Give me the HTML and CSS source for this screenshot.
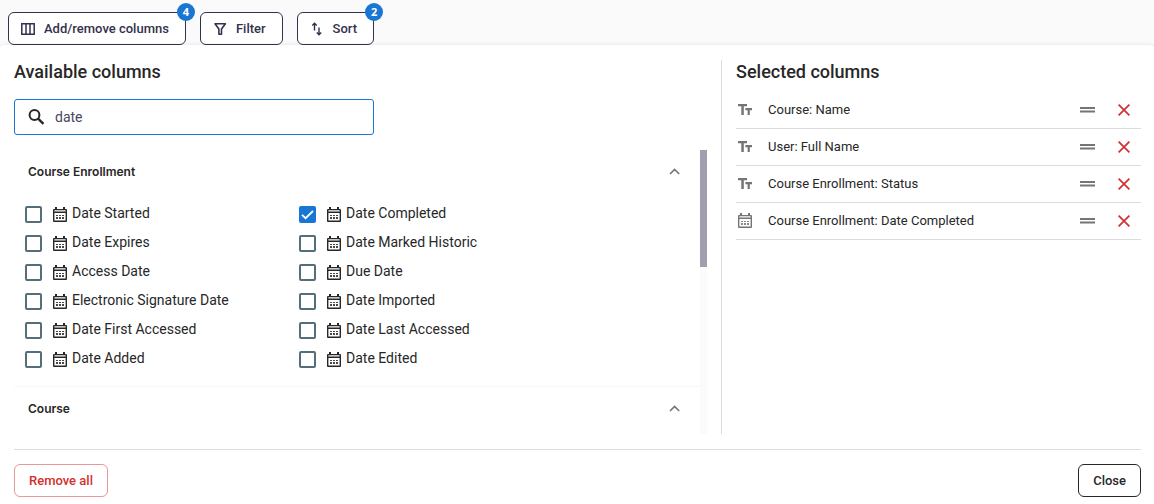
FILE: index.html
```html
<!DOCTYPE html>
<html lang="en">
<head>
    <meta charset="UTF-8">
    <meta name="viewport" content="width=device-width, initial-scale=1.0">
    <title>Report columns</title>
    <link rel="stylesheet" href="styles.css">
</head>
<body>
    <svg class="sprite" aria-hidden="true">
        <symbol id="calendar" viewBox="0 0 14 15">
            <path d="M2 0h2v2h6V0h2v2h1.300l.7.8v11.400l-.7.8H.7l-.7-.8V2.800L.7 2H2zM1.400 3.200v1.400h11.200V3.200zM1.400 6v7.600h11.200V6z" fill="currentColor" fill-rule="evenodd"/>
            <path d="M3 8h2v1H3zM6 8h2v1H6zM9 8h2v1H9zM3 10h2v2H3zM6 10h2v2H6zM9 10h2v2H9z" fill="currentColor" opacity="0.85"/>
        </symbol>
        <symbol id="text" viewBox="0 0 14 11">
            <path d="M0 0h9v2.300H5.800V11H3.300V2.300H0zM7.400 4H14v2.200h-2.200V11H9.600V6.200H7.400z" fill="currentColor"/>
        </symbol>
        <symbol id="drag" viewBox="0 0 16 6">
            <path d="M0 0h15v2H0zM0 3.600h15v1.900H0z" fill="currentColor"/>
        </symbol>
        <symbol id="cross" viewBox="0 0 12 12">
            <path d="M0.600 0.600l10.800 10.800M11.400 0.600L0.600 11.400" fill="none" stroke="currentColor" stroke-width="1.700"/>
        </symbol>
        <symbol id="chevron" viewBox="0 0 12 7">
            <path d="M1 6l4.600-4.500L10.200 6" fill="none" stroke="currentColor" stroke-width="1.700"/>
        </symbol>
    </svg>

    <div class="toolbar">
        <button class="tool-button" type="button">
            <svg width="14" height="12" viewBox="0 0 14 12"><path d="M0.8 0.8h12.4v10.4H0.8zM5 1v10M9 1v10" fill="none" stroke="currentColor" stroke-width="1.5"/></svg>
            Add/remove columns
            <span class="badge">4</span>
        </button>
        <button class="tool-button" type="button">
            <svg width="14" height="12" viewBox="0 0 14 12"><path d="M2 0.8h10.400L8.500 6v5.200H5.900V6z" fill="none" stroke="currentColor" stroke-width="1.6" stroke-linejoin="round"/></svg>
            Filter
        </button>
        <button class="tool-button" type="button">
            <svg width="14" height="14" viewBox="0 0 14 14"><path d="M4.5 8.500V1.2M2.300 3.500L4.5 1.2 6.700 3.500M9 5.500v7.300M6.800 10.500L9 12.800l2.200-2.300" fill="none" stroke="currentColor" stroke-width="1.4"/></svg>
            Sort
            <span class="badge">2</span>
        </button>
    </div>

    <div class="panel">
        <div class="columns">
            <section class="available">
                <h2>Available columns</h2>
                <label class="search">
                    <svg width="16" height="16" viewBox="0 0 16 16"><circle cx="6.500" cy="6" r="4.900" fill="none" stroke="currentColor" stroke-width="2"/><path d="M10.100 9.600l5.400 5.400" stroke="currentColor" stroke-width="2.400"/></svg>
                    <input type="text" value="date" aria-label="Search columns">
                </label>
                <div class="list-wrapper">
                    <div class="list">
                        <div class="group">
                            <button class="group-header" type="button">Course Enrollment <svg width="12" height="7"><use href="#chevron"/></svg></button>
                            <div class="options">
                                <label class="option"><input type="checkbox"><svg width="14" height="15"><use href="#calendar"/></svg><span>Date Started</span></label>
                                <label class="option"><input type="checkbox" checked><svg width="14" height="15"><use href="#calendar"/></svg><span>Date Completed</span></label>
                                <label class="option"><input type="checkbox"><svg width="14" height="15"><use href="#calendar"/></svg><span>Date Expires</span></label>
                                <label class="option"><input type="checkbox"><svg width="14" height="15"><use href="#calendar"/></svg><span>Date Marked Historic</span></label>
                                <label class="option"><input type="checkbox"><svg width="14" height="15"><use href="#calendar"/></svg><span>Access Date</span></label>
                                <label class="option"><input type="checkbox"><svg width="14" height="15"><use href="#calendar"/></svg><span>Due Date</span></label>
                                <label class="option"><input type="checkbox"><svg width="14" height="15"><use href="#calendar"/></svg><span>Electronic Signature Date</span></label>
                                <label class="option"><input type="checkbox"><svg width="14" height="15"><use href="#calendar"/></svg><span>Date Imported</span></label>
                                <label class="option"><input type="checkbox"><svg width="14" height="15"><use href="#calendar"/></svg><span>Date First Accessed</span></label>
                                <label class="option"><input type="checkbox"><svg width="14" height="15"><use href="#calendar"/></svg><span>Date Last Accessed</span></label>
                                <label class="option"><input type="checkbox"><svg width="14" height="15"><use href="#calendar"/></svg><span>Date Added</span></label>
                                <label class="option"><input type="checkbox"><svg width="14" height="15"><use href="#calendar"/></svg><span>Date Edited</span></label>
                            </div>
                        </div>
                        <div class="group">
                            <button class="group-header" type="button">Course <svg width="12" height="7"><use href="#chevron"/></svg></button>
                        </div>
                    </div>
                    <div class="scrollbar"><div class="thumb"></div></div>
                </div>
            </section>

            <section class="selected">
                <h2>Selected columns</h2>
                <ul>
                    <li>
                        <svg width="14" height="11"><use href="#text"/></svg>
                        <span>Course: Name</span>
                        <button class="drag" type="button" aria-label="Move"><svg width="16" height="6"><use href="#drag"/></svg></button>
                        <button class="remove" type="button" aria-label="Remove"><svg width="12" height="12"><use href="#cross"/></svg></button>
                    </li>
                    <li>
                        <svg width="14" height="11"><use href="#text"/></svg>
                        <span>User: Full Name</span>
                        <button class="drag" type="button" aria-label="Move"><svg width="16" height="6"><use href="#drag"/></svg></button>
                        <button class="remove" type="button" aria-label="Remove"><svg width="12" height="12"><use href="#cross"/></svg></button>
                    </li>
                    <li>
                        <svg width="14" height="11"><use href="#text"/></svg>
                        <span>Course Enrollment: Status</span>
                        <button class="drag" type="button" aria-label="Move"><svg width="16" height="6"><use href="#drag"/></svg></button>
                        <button class="remove" type="button" aria-label="Remove"><svg width="12" height="12"><use href="#cross"/></svg></button>
                    </li>
                    <li>
                        <svg width="14" height="15"><use href="#calendar"/></svg>
                        <span>Course Enrollment: Date Completed</span>
                        <button class="drag" type="button" aria-label="Move"><svg width="16" height="6"><use href="#drag"/></svg></button>
                        <button class="remove" type="button" aria-label="Remove"><svg width="12" height="12"><use href="#cross"/></svg></button>
                    </li>
                </ul>
            </section>
        </div>
        <div class="footer">
            <button class="remove-all" type="button">Remove all</button>
            <button class="close" type="button">Close</button>
        </div>
    </div>
</body>
</html>
```
FILE: styles.css
```css
* {
    box-sizing: border-box;
}
body {
    margin: 0;
    background-color: #fafafa;
    color: #272727;
    font-family: Roboto, sans-serif;
    font-size: 14px;
}
button, input {
    font-family: inherit;
    color: inherit;
    margin: 0;
}
button {
    cursor: pointer;
}
svg {
    display: block;
    flex-shrink: 0;
}
.sprite {
    position: absolute;
    width: 0;
    height: 0;
}
.toolbar {
    display: flex;
    gap: 14px;
    padding: 12px 8px 0;
}
.tool-button {
    position: relative;
    display: flex;
    align-items: center;
    gap: 9px;
    height: 33px;
    padding: 0 16px 0 12px;
    border: 1px solid #34314c;
    border-radius: 6px;
    background-color: #fff;
    color: #34314c;
    font-size: 13px;
    font-weight: 500;
}
.badge {
    position: absolute;
    top: -10px;
    right: -10px;
    width: 18px;
    height: 18px;
    border-radius: 50%;
    background-color: #1976d2;
    color: #fff;
    font-family: "Open Sans", sans-serif;
    font-size: 11px;
    font-weight: 700;
    line-height: 17px;
    text-align: center;
}
.panel {
    position: relative;
    padding: 15px 13px 7px 14px;
    border-radius: 4px 4px 0 0;
    background-color: #fff;
    box-shadow: 0 0 4px rgba(0, 0, 0, 0.1);
}
.columns {
    display: grid;
    grid-template-columns: minmax(0, 1fr) 420px;
    padding-bottom: 15px;
    border-bottom: 1px solid #dcdcdc;
}
h2 {
    margin: 0;
    font-size: 18px;
    font-weight: 500;
    line-height: 24px;
}
.available {
    padding-right: 14px;
}
.search {
    display: flex;
    align-items: center;
    gap: 11px;
    width: 360px;
    max-width: 100%;
    height: 36px;
    margin: 15px 0;
    padding: 0 13px;
    border: 1px solid #1976d2;
    border-radius: 3px;
}
.search input {
    flex: 1;
    min-width: 0;
    padding: 0;
    border: none;
    outline: none;
    background: none;
    color: #4a4660;
    font-size: 14px;
}
.list-wrapper {
    display: flex;
    height: 284px;
}
.list {
    flex: 1;
    overflow: hidden;
}
.group + .group {
    border-top: 1px solid #f7f7f7;
}
.group-header {
    display: flex;
    justify-content: space-between;
    align-items: center;
    width: 100%;
    height: 42px;
    padding: 0 19px 0 14px;
    border: none;
    background: none;
    font-family: Inter, sans-serif;
    font-size: 12px;
    font-weight: 600;
}
.group-header svg {
    color: #757575;
}
.options {
    display: grid;
    grid-template-columns: 274px 1fr;
    grid-auto-rows: 29px;
    padding: 8px 11px 12px;
}
.option {
    display: flex;
    align-items: center;
    font-size: 14px;
    cursor: pointer;
}
.option svg {
    margin: 0 5px 0 11px;
}
.option span {
    padding-bottom: 3px;
}
.option input {
    appearance: none;
    flex-shrink: 0;
    width: 17px;
    height: 17px;
    border: 2px solid #546e7a;
    border-radius: 2px;
}
.option input:checked {
    border-color: #1976d2;
    background: #1976d2 url("data:image/svg+xml,%3Csvg xmlns='http://www.w3.org/2000/svg' viewBox='0 0 13 13'%3E%3Cpath d='M1 6.8l3.6 3.4L12 3' fill='none' stroke='white' stroke-width='1.8'/%3E%3C/svg%3E") center no-repeat;
}
.scrollbar {
    width: 7px;
    background-color: #fbfbfb;
}
.thumb {
    height: 117px;
    background-color: #a09fb0;
}
.selected {
    padding-left: 14px;
    border-left: 1px solid #dcdcdc;
}
.selected ul {
    margin: 8px 0 0;
    padding: 0;
    list-style: none;
}
.selected li {
    display: flex;
    align-items: center;
    height: 37px;
    padding: 0 11px 0 2px;
    border-bottom: 1px solid #dcdcdc;
    font-size: 13px;
}
.selected li > svg {
    margin-bottom: 1px;
    color: #757575;
}
.selected li span {
    flex: 1;
    padding: 0 0 2px 16px;
}
.drag, .remove {
    padding: 0;
    border: none;
    background: none;
}
.drag {
    margin-right: 22px;
    color: #757575;
}
.remove {
    color: #d32f2f;
}
.footer {
    display: flex;
    justify-content: space-between;
    padding-top: 14px;
}
.remove-all, .close {
    height: 33px;
    padding: 0 14px;
    border: 1px solid #272727;
    border-radius: 6px;
    background-color: #fff;
    font-size: 13px;
    font-weight: 500;
}
.remove-all {
    border-color: #ea9797;
    color: #d32f2f;
}
```
